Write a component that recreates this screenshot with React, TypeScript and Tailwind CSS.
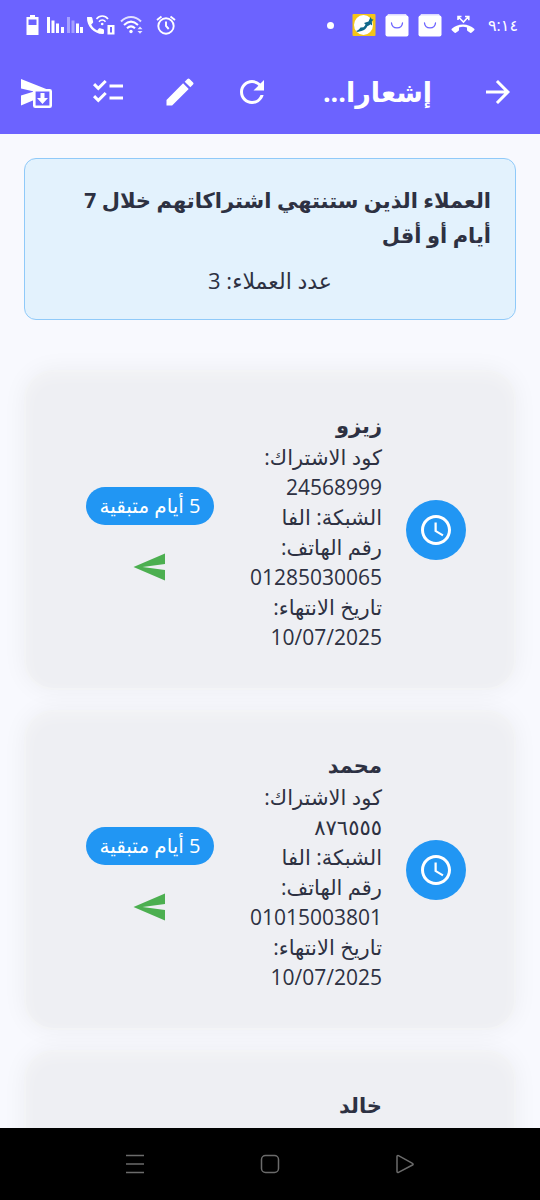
import React from 'react';
import {
  MdAccessTime,
  MdArrowForward,
  MdChecklist,
  MdEdit,
  MdRefresh,
  MdSend,
} from 'react-icons/md';

interface Subscription {
  code: string;
  network: string;
  phone: string;
  endDate: string;
  daysLeft: number;
}

interface Client {
  id: string;
  name: string;
  subscription?: Subscription;
}

const clients: Client[] = [
  {
    id: '1',
    name: 'زيزو',
    subscription: { code: '24568999', network: 'الفا', phone: '01285030065', endDate: '10/07/2025', daysLeft: 5 },
  },
  {
    id: '2',
    name: 'محمد',
    subscription: { code: '٨٧٦٥٥٥', network: 'الفا', phone: '01015003801', endDate: '10/07/2025', daysLeft: 5 },
  },
  { id: '3', name: 'خالد' },
];

const BagIcon: React.FC = () => (
  <svg width="24" height="24" viewBox="0 0 24 24" aria-hidden="true">
    <path d="M3 1h18l2 4H1z" fill="#dcdaff" />
    <rect x="0.5" y="2.5" width="23" height="21" rx="2" fill="#fff" />
    <path d="M6.500 10c.5 6.500 10.500 6.500 11 0" fill="none" stroke="#6c63ff" strokeWidth="1.300" strokeLinecap="round" />
  </svg>
);

const SendArchiveIcon: React.FC = () => (
  <svg width="36" height="36" viewBox="0 0 36 36" aria-hidden="true">
    <path d="M3 5l29 11.500H16V26L3 31.500V21.500l13-4-13-3z" fill="#fff" />
    <rect x="16.300" y="16.300" width="16.400" height="16.400" rx="1" fill="#6c63ff" stroke="#fff" strokeWidth="2.600" />
    <path d="M22.500 19h4v5H30L24.500 30 19 24h3.500z" fill="#fff" />
  </svg>
);

const StatusBar: React.FC = () => (
  <div dir="ltr" className="flex h-[50px] items-center justify-between pl-[26px] pr-6 text-white">
    <div className="flex items-center">
      <svg width="13" height="20" viewBox="0 0 13 20" aria-hidden="true">
        <path fillRule="evenodd" fill="#fff" d="M4 0h5v2h3.500v18H.5V2H4zM2.500 4.500V10h8V4.500z" />
      </svg>
      <svg className="ml-[7px]" width="38" height="18" viewBox="0 0 38 18" fill="#fff" aria-hidden="true">
        <path d="M1 1h3v16H1zM5.500 4.500h3V17h-3zM10 7.500h3V17h-3zM15 11h3v6h-3zM30 7.500h3V17h-3zM34 11h3v6h-3z" />
        <path opacity=".4" d="M21 1h3v16h-3zM25.500 4.500h3V17h-3z" />
      </svg>
      <svg className="ml-0.5" width="30" height="22" viewBox="0 0 30 22" aria-hidden="true">
        <path
          fill="#fff"
          d="M1 3.500C.6 12 8 20 16.500 20c1 0 1.500-.5 1.500-1.500v-2.300c0-.6-.4-1-1-1.200l-3-.7c-.6-.1-1 0-1.300.4l-1.500 1.700c-2.700-1.400-4.600-3.300-6-6L6.800 9c.4-.4.5-.8.3-1.400L6.300 4c-.2-.6-.5-.9-1.200-.9H2c-.6 0-1 0-1 .4z"
        />
        <path d="M10.500 5c3-4 8.500-4 11.500 0M13 7.700c1.800-2.200 4.700-2.200 6.500 0" fill="none" stroke="#fff" strokeWidth="1.600" />
        <circle cx="16.200" cy="10" r="1.300" fill="#fff" />
        <path fillRule="evenodd" fill="#fff" d="M21.500 11h7v9.500h-7zM24 13v5.500h2V13z" />
      </svg>
      <svg className="ml-1" width="24" height="20" viewBox="0 0 24 20" aria-hidden="true">
        <g fill="none" stroke="#fff" strokeWidth="2">
          <path d="M1 6.500C7 .5 15 .5 21 6.500" opacity=".8" />
          <path d="M4 10c4.500-4.300 9.500-4.300 14 0M7 13.300c2.500-2.400 5.500-2.400 8 0" />
        </g>
        <circle cx="11" cy="16.500" r="1.700" fill="#fff" />
        <path d="M17.500 14.200 20 11.500l2.500 2.700zM17.500 16l2.500 2.700 2.500-2.700z" fill="#fff" opacity=".85" />
      </svg>
      <svg className="ml-3" width="20" height="20" viewBox="0 0 20 20" fill="none" stroke="#fff" aria-hidden="true">
        <circle cx="10" cy="11" r="7.700" strokeWidth="1.900" />
        <path d="M10 6.500V11l2.700 3M1 5l4.500-3.500M19 5l-4.500-3.500" strokeWidth="1.900" />
      </svg>
    </div>

    <div className="flex items-center gap-[9px]">
      <span className="mr-[9px] h-[7px] w-[7px] rounded-full bg-white" />
      <svg width="24" height="24" viewBox="0 0 24 24" aria-hidden="true">
        <rect x="0.5" y="1" width="23" height="22" rx="1" fill="#f5c518" />
        <ellipse cx="11.500" cy="12" rx="9.500" ry="10" fill="#fff" />
        <path d="M4 18c2-.2 3.300-2 4.500-3.500l3-.3c1-.8 1.500-1.700 2-2.700L12 10l4.500-1.500L18.500 4l1.200 2.200 1.800.3-1.700 2 .4 4-2-1.200c-.7 1-1.400 1.300-2.700 1.700-1.300 2.500-3 4.500-6 5L5.500 19z" fill="#11688b" />
      </svg>
      <BagIcon />
      <BagIcon />
      <svg width="24" height="20" viewBox="0 0 24 20" aria-hidden="true">
        <path
          fill="#fff"
          d="M12 9.500c-4.500 0-8.300 1.600-11.200 4.300-.5.500-.5 1 0 1.500l2.500 2.300c.5.500 1 .5 1.500.1l2.600-1.800c.4-.3.6-.6.6-1.100v-2.400c2.600-.8 5.400-.8 8 0v2.400c0 .5.2.8.6 1.100l2.600 1.800c.5.400 1 .4 1.500-.1l2.500-2.300c.5-.5.5-1 0-1.500C20.300 11.100 16.500 9.500 12 9.500z"
        />
        <path d="M7 5V1.500h3.500M7.500 2l5 5 5-5.500M14 1.500h3.800v3.800" fill="none" stroke="#fff" strokeWidth="1.600" />
      </svg>
      <span className="ml-1 w-7 whitespace-nowrap text-base leading-5">٩:١٤</span>
    </div>
  </div>
);

const ClientCard: React.FC<{ client: Client }> = ({ client }) => {
  const { name, subscription } = client;

  return (
    <article className="flex items-center rounded-[30px] border-2 border-white/30 bg-[#eeeff3] py-9 pl-[60px] pr-12 shadow-[0_0_24px_rgba(0,0,0,0.05),inset_0_4px_16px_rgba(255,255,255,0.35)]">
      <div className="flex h-[60px] w-[60px] shrink-0 items-center justify-center rounded-full bg-[#2196f3] text-white">
        <MdAccessTime size={36} />
      </div>

      <div className="mx-6 min-h-[244px] min-w-0 flex-1 text-[21px] leading-[30px]">
        <h2 className="text-[21px] font-bold leading-[34px]">{name}</h2>
        {subscription && (
          <>
            <p>كود الاشتراك: {subscription.code}</p>
            <p>الشبكة: {subscription.network}</p>
            <p>رقم الهاتف: {subscription.phone}</p>
            <p>تاريخ الانتهاء: {subscription.endDate}</p>
          </>
        )}
      </div>

      <div className="flex w-32 shrink-0 flex-col items-center gap-6 pt-3">
        {subscription && (
          <span className="flex h-[38px] w-full items-center justify-center whitespace-nowrap rounded-full bg-[#2196f3] text-xl text-white">
            {subscription.daysLeft} أيام متبقية
          </span>
        )}
        <button type="button" aria-label="إرسال" className="text-[#4caf50]">
          <MdSend size={36} className="-scale-x-100" />
        </button>
      </div>
    </article>
  );
};

const App: React.FC = () => {
  return (
    <div
      dir="rtl"
      lang="ar"
      className="flex h-screen flex-col overflow-hidden bg-[#f8f9fe] font-['Open_Sans','DejaVu_Sans',sans-serif] text-[#2d3142]"
    >
      <header className="shrink-0 bg-[#6c63ff] text-white">
        <StatusBar />
        <div className="flex h-[84px] items-center">
          <button type="button" aria-label="رجوع" className="flex w-[84px] justify-center">
            <MdArrowForward size={36} />
          </button>
          <h1 className="flex-1 whitespace-nowrap pr-6 text-[27px] font-bold leading-9">إشعارا...</h1>
          <button type="button" aria-label="تحديث" className="flex w-[72px] justify-center">
            <MdRefresh size={36} />
          </button>
          <button type="button" aria-label="تعديل" className="flex w-[72px] justify-center">
            <MdEdit size={36} />
          </button>
          <button type="button" aria-label="تحديد الكل" className="flex w-[72px] justify-center">
            <MdChecklist size={36} />
          </button>
          <button type="button" aria-label="إرسال وأرشفة" className="flex w-[72px] justify-center">
            <SendArchiveIcon />
          </button>
        </div>
      </header>

      <main className="min-h-0 flex-1 overflow-hidden px-6 pt-6">
        <section className="rounded-xl border border-[#90caf9] bg-[#e3f2fd] p-6">
          <h2 className="text-[21px] font-bold leading-[35px]">
            العملاء الذين ستنتهي اشتراكاتهم خلال 7 أيام أو أقل
          </h2>
          <p className="mt-3 text-center text-[22px] leading-[30px]">عدد العملاء: 3</p>
        </section>

        <div className="mt-[50px] flex flex-col gap-5">
          {clients.map((client) => (
            <ClientCard key={client.id} client={client} />
          ))}
        </div>
      </main>

      <nav dir="ltr" className="h-[72px] shrink-0 bg-black text-[#6b6b6b]">
        <div className="mx-auto grid h-full w-3/4 grid-cols-3 items-center justify-items-center">
          <button type="button" aria-label="التطبيقات الأخيرة">
            <svg width="20" height="20" viewBox="0 0 20 20" stroke="currentColor" strokeWidth="1.500">
              <path d="M1 1.500h18M1 10h18M1 18.500h18" />
            </svg>
          </button>
          <button type="button" aria-label="الرئيسية">
            <svg width="20" height="20" viewBox="0 0 20 20" fill="none" stroke="currentColor" strokeWidth="1.500">
              <rect x="1.500" y="1.500" width="17" height="17" rx="4" />
            </svg>
          </button>
          <button type="button" aria-label="رجوع للخلف">
            <svg width="20" height="20" viewBox="0 0 20 20" fill="none" stroke="currentColor" strokeWidth="1.500" strokeLinejoin="round">
              <path d="M2 2.500v15c0 .8.8 1.200 1.500.8l14-7.300c.8-.4.8-1.300 0-1.700l-14-7.600C2.800 1.300 2 1.700 2 2.500z" />
            </svg>
          </button>
        </div>
      </nav>
    </div>
  );
};

export default App;
